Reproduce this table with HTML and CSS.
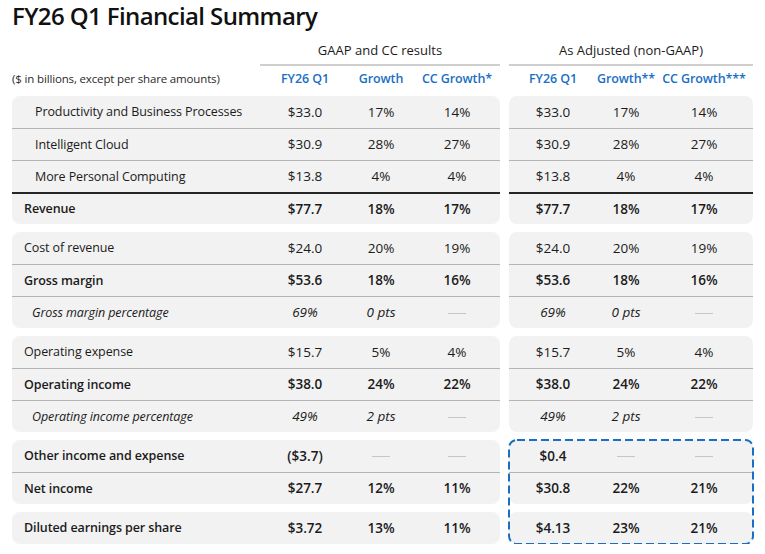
FILE: index.html
```html
<!DOCTYPE html>
<html lang="en">
<head>
<meta charset="utf-8">
<title>FY26 Q1 Financial Summary</title>
<link rel="stylesheet" href="styles.css">
</head>
<body>
<div class="page">
  <h1 class="title">FY26 Q1 Financial Summary</h1>
  <div class="report">
    <div class="side gaap">
      <div class="group-head"><div class="group-title">GAAP and CC results</div></div>
      <div class="col-head">
        <div class="note">($ in billions, except per share amounts)</div>
        <div>FY26 Q1</div><div>Growth</div><div>CC Growth*</div>
      </div>
      <div class="panel">
        <div class="row"><div class="label sub">Productivity and Business Processes</div><div>$33.0</div><div>17%</div><div>14%</div></div>
        <div class="row"><div class="label sub">Intelligent Cloud</div><div>$30.9</div><div>28%</div><div>27%</div></div>
        <div class="row"><div class="label sub">More Personal Computing</div><div>$13.8</div><div>4%</div><div>4%</div></div>
        <div class="row total bold"><div class="label">Revenue</div><div>$77.7</div><div>18%</div><div>17%</div></div>
      </div>
      <div class="panel">
        <div class="row"><div class="label">Cost of revenue</div><div>$24.0</div><div>20%</div><div>19%</div></div>
        <div class="row bold"><div class="label">Gross margin</div><div>$53.6</div><div>18%</div><div>16%</div></div>
        <div class="row pct"><div class="label">Gross margin percentage</div><div>69%</div><div>0 pts</div><div><span class="dash"></span></div></div>
      </div>
      <div class="panel">
        <div class="row"><div class="label">Operating expense</div><div>$15.7</div><div>5%</div><div>4%</div></div>
        <div class="row bold"><div class="label">Operating income</div><div>$38.0</div><div>24%</div><div>22%</div></div>
        <div class="row pct"><div class="label">Operating income percentage</div><div>49%</div><div>2 pts</div><div><span class="dash"></span></div></div>
      </div>
      <div class="panel">
        <div class="row bold"><div class="label">Other income and expense</div><div>($3.7)</div><div><span class="dash"></span></div><div><span class="dash"></span></div></div>
        <div class="row bold"><div class="label">Net income</div><div>$27.7</div><div>12%</div><div>11%</div></div>
      </div>
      <div class="panel">
        <div class="row bold"><div class="label">Diluted earnings per share</div><div>$3.72</div><div>13%</div><div>11%</div></div>
      </div>
    </div>

    <div class="side adj">
      <div class="group-head"><div class="group-title">As Adjusted (non-GAAP)</div></div>
      <div class="col-head">
        <div>FY26 Q1</div><div>Growth**</div><div>CC Growth***</div>
      </div>
      <div class="panel">
        <div class="row"><div>$33.0</div><div>17%</div><div>14%</div></div>
        <div class="row"><div>$30.9</div><div>28%</div><div>27%</div></div>
        <div class="row"><div>$13.8</div><div>4%</div><div>4%</div></div>
        <div class="row total bold"><div>$77.7</div><div>18%</div><div>17%</div></div>
      </div>
      <div class="panel">
        <div class="row"><div>$24.0</div><div>20%</div><div>19%</div></div>
        <div class="row bold"><div>$53.6</div><div>18%</div><div>16%</div></div>
        <div class="row pct"><div>69%</div><div>0 pts</div><div><span class="dash"></span></div></div>
      </div>
      <div class="panel">
        <div class="row"><div>$15.7</div><div>5%</div><div>4%</div></div>
        <div class="row bold"><div>$38.0</div><div>24%</div><div>22%</div></div>
        <div class="row pct"><div>49%</div><div>2 pts</div><div><span class="dash"></span></div></div>
      </div>
      <div class="highlight">
        <div class="panel">
          <div class="row bold"><div>$0.4</div><div><span class="dash"></span></div><div><span class="dash"></span></div></div>
          <div class="row bold"><div>$30.8</div><div>22%</div><div>21%</div></div>
        </div>
        <div class="panel">
          <div class="row bold"><div>$4.13</div><div>23%</div><div>21%</div></div>
        </div>
        <svg class="dashed" width="246" height="106" viewBox="0 0 246 106" aria-hidden="true">
          <rect x="1" y="1" width="244" height="104" rx="8" ry="8" fill="none" stroke="#1a6fc4" stroke-width="2" stroke-dasharray="8 4"/>
        </svg>
      </div>
    </div>
  </div>
</div>
</body>
</html>
```
FILE: styles.css
```css
* { box-sizing: border-box; }

body {
  margin: 0;
  background: #ffffff;
  color: #1b1b1b;
  font-family: "Open Sans", "Noto Sans", sans-serif;
  font-size: 13px;
}

.page {
  padding: 0 12px;
}

.title {
  margin: 0;
  font-size: 24px;
  font-weight: 600;
  line-height: 32px;
  letter-spacing: -0.6px;
  color: #111;
}

.report {
  display: flex;
  gap: 9px;
}

.side.gaap { width: 488px; }
.side.adj { width: 244px; }

.group-head {
  padding-top: 8px;
  height: 34px;
}
.gaap .group-head { padding-left: 248px; }

.group-title {
  line-height: 20px;
  height: 26px;
  padding-bottom: 4px;
  border-bottom: 2px solid #cfcfcf;
  text-align: center;
  font-size: 13px;
  color: #1b1b1b;
}

.col-head {
  display: grid;
  height: 30px;
  line-height: 26px;
  color: #1a6fc4;
  font-weight: 600;
  font-size: 12.5px;
  letter-spacing: -0.1px;
}
.col-head > div {
  justify-self: center;
  white-space: nowrap;
}
.gaap .col-head { grid-template-columns: 255px 76px 76px 76px; }
.adj .col-head { grid-template-columns: 88px 58px 98px; }

.col-head .note {
  justify-self: start;
  color: #2a2a2a;
  font-weight: 400;
  font-size: 11.5px;
  letter-spacing: -0.15px;
}

.panel {
  background: #f2f2f2;
  border-radius: 8px;
  overflow: hidden;
}
.panel + .panel,
.panel + .highlight,
.highlight .panel + .panel {
  margin-top: 8px;
}

.row {
  display: grid;
  align-items: center;
  height: 32px;
  padding-bottom: 1px;
  text-align: center;
  font-size: 13.5px;
}
.gaap .row { grid-template-columns: 255px 76px 76px 76px; }
.adj .row { grid-template-columns: 88px 58px 98px; }

.row + .row { border-top: 1px solid #b4b4b4; }
.row.total { border-top: 2px solid #262626; }

.row.bold { font-weight: 600; }
.row.pct { font-style: italic; }

.label {
  text-align: left;
  padding-left: 12px;
  font-size: 12.5px;
  letter-spacing: -0.1px;
}
.label.sub { padding-left: 23px; }
.pct .label { padding-left: 20px; }

.dash {
  display: inline-block;
  width: 18px;
  height: 1px;
  background: #c6c6c6;
  vertical-align: middle;
}

.highlight {
  position: relative;
}
.dashed {
  position: absolute;
  left: -1px;
  top: -1px;
  pointer-events: none;
}
```
